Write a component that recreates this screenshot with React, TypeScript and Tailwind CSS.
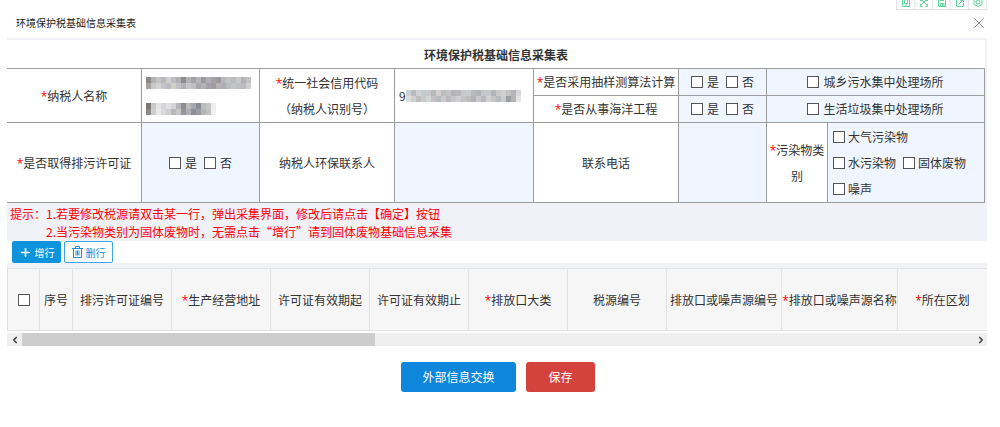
import type { ReactNode } from 'react';
import { Plus, X, ChevronLeft, ChevronRight } from 'lucide-react';

const columns = [
  { name: '序号', width: 'w-[33px]' },
  { name: '排污许可证编号', width: 'w-[99px]' },
  { name: '生产经营地址', width: 'w-[99px]', required: true },
  { name: '许可证有效期起', width: 'w-[99px]' },
  { name: '许可证有效期止', width: 'w-[99px]' },
  { name: '排放口大类', width: 'w-[99px]', required: true },
  { name: '税源编号', width: 'w-[99px]' },
  { name: '排放口或噪声源编号', width: 'w-[115px]' },
  { name: '排放口或噪声源名称', width: 'w-[116px]', required: true },
  { name: '所在区划', width: 'w-[89px]', required: true },
];

const nameMask = [
  '8c8884 b4b4b6 c4c4c6 b9b9bb cfd0d2 bdbcc0 b2b0b0 8f8d90 b3b3b6 a5a3a8 b9b5b5 9b9ca2 b0aeb4 a3a1a4 989a9c b8b8bb c4c3c2 b7bbc0 c9c8c8 b4b3b6 c2c2c4',
  'a8a4a0 c8c8ca d4d3d4 c4c4c8 bcbcc0 d3cfca c1c1c4 b2b2b5 c7c6c8 bebdc2 a9a8ae b3b3b4 a2a2a8 9f9da2 b7b3b3 adafb4 bbbcc0 c5c4c6 bdbec2 bdbcbc cfcfd1',
];

const branchMask = [
  '7b7875 c9c8ca e4e3e3 d6d6d8 e0e0e1 d4d4d6 b3b3b8 8e8c92 bcb9bb a5a5ad 8a8a94 bebdbd c5c5c6 eeeeee',
  '8b8886 cfcfd2 e9e9ea dadadc cfcfd1 b9b9bc c6c6c9 96959a b0afb5 8e8e99 9c9ca4 b5b5b9 c1c1c3 f0f0f0',
];

const codeMask = [
  'd0d0d0 b8bcbc d3d1d1 c3cdce c9c9cc b4b8ba d2cecd bcbcbf c4c4c5 b1b4b8 bab9b9 c8c8ca c6cccd bcb9bb b2b4b9 c8c6c8 c4c7cb b4b4b8 cacacb d1cfcd c0c2c4 b4b5b7 d6d6d8',
  'dedede cfd1d1 bebebf c9caca d3d7d8 c4c2c3 b7bbbe cbc9c8 b9b9bd c3c6c8 d0cecf c2c4c8 bdbdbe b3b1b4 c7c9cb b9b8bc d1d0d0 c4c5c9 b8b9bd cbcccd 9e9ea0 b5b5b8 e5e5e6',
];

function Mosaic({ rows }: { rows: string[] }) {
  const cells = rows.map((row) => row.split(' '));
  const width = cells[0].length * 5;
  return (
    <svg width={width} height={12} viewBox={`0 0 ${width} 12`} className="block shrink-0" aria-hidden="true">
      {cells.map((row, y) =>
        row.map((color, x) => <rect key={`${x}-${y}`} x={x * 5} y={y * 6} width={5} height={6} fill={`#${color}`} />)
      )}
    </svg>
  );
}

function Required() {
  return <span className="font-['Open_Sans',sans-serif] leading-none text-[#ff0000]">*</span>;
}

function Box({ label }: { label?: string }) {
  return (
    <input
      type="checkbox"
      aria-label={label}
      className="size-3 shrink-0 appearance-none border border-[#555] bg-white checked:bg-[#0d86dc]"
    />
  );
}

function Check({ children, gap = 'gap-1' }: { children: ReactNode; gap?: string }) {
  return (
    <label className={`flex items-center whitespace-nowrap ${gap}`}>
      <Box />
      {children}
    </label>
  );
}

function YesNo() {
  return (
    <div className="flex items-center justify-center gap-[7px]">
      <Check>是</Check>
      <Check>否</Check>
    </div>
  );
}

function TrashIcon() {
  return (
    <svg width={11} height={12} viewBox="0 0 11 12" fill="none" stroke="currentColor">
      <path d="M0 2.500H11M3.500 2V0.500H7.500V2M1.500 3V11.500H9.500V3M4 4.500V9.500M5.500 4.500V9.500M7 4.500V9.500" />
    </svg>
  );
}

function Toolbar() {
  const item = 'flex h-[9px] w-[18px] items-end justify-center border-r border-[#e6e6e6] pb-[2px]';
  const icon = { width: 10, height: 7, viewBox: '0 3 10 7', fill: 'none', stroke: '#5fd39a' };
  return (
    <div className="mr-[13px] flex h-[10px] border-b border-l border-[#e0e0e0]">
      <button aria-label="手机" className={item}>
        <svg {...icon}><path d="M1.500 0V9.500H8.500V0M3.500 0V6.500H6.500V0M4 8H6" /></svg>
      </button>
      <button aria-label="全屏" className={item}>
        <svg {...icon}><path d="M2 2L8 8M8 2L2 8M1.500 7V9.500H3.500M6.500 9.500H8.500V7M1 3.500H3M7 3.500H9" /></svg>
      </button>
      <button aria-label="保存图片" className={item}>
        <svg {...icon}><path d="M1.500 0V9.500H8.500V0M3 3.500H7M3.500 9V6.500H7V9M5.500 7V9" /></svg>
      </button>
      <button aria-label="分享" className={item}>
        <svg {...icon}><path d="M1.500 1V9.500H8.500V6M3.500 7.500L8 3M5.500 3.500H8.500V5" /></svg>
      </button>
      <button aria-label="设置" className={item}>
        <svg {...icon}><path d="M5 0.500L9 2.500V7.500L5 9.500L1 7.500V2.500Z" /><circle cx="5" cy="5" r="2" /></svg>
      </button>
    </div>
  );
}

function BaseInfo() {
  const label = 'border-r border-b border-[#9c9c9c] bg-white p-0 text-center font-normal whitespace-nowrap';
  const field = 'border-r border-b border-[#9c9c9c] bg-[#f0f6ff] p-0';
  return (
    <table className="w-full table-fixed border-separate border-spacing-0 leading-[26px]">
      <caption className="h-[29px] border-b border-[#9c9c9c] bg-white pt-[2px] text-center font-bold">环境保护税基础信息采集表</caption>
      <colgroup>
        <col className="w-[135px]" />
        <col className="w-[118px]" />
        <col className="w-[135px]" />
        <col className="w-[139px]" />
        <col className="w-[145px]" />
        <col className="w-[88px]" />
        <col className="w-[61px]" />
        <col />
      </colgroup>
      <tbody>
        <tr className="h-[27px]">
          <th rowSpan={2} className={label}><Required />纳税人名称</th>
          <td rowSpan={2} className="border-r border-b border-[#9c9c9c] bg-white p-0 pl-1">
            <div className="flex flex-col gap-[14px]">
              <Mosaic rows={nameMask} />
              <Mosaic rows={branchMask} />
            </div>
          </td>
          <th rowSpan={2} className={label}><Required />统一社会信用代码<br />（纳税人识别号）</th>
          <td rowSpan={2} className="border-r border-b border-[#9c9c9c] bg-white p-0 pl-1">
            <div className="flex items-center">
              9
              <Mosaic rows={codeMask} />
            </div>
          </td>
          <th className={label}><Required />是否采用抽样测算法计算</th>
          <td className={field}><YesNo /></td>
          <td colSpan={2} className={field}>
            <div className="flex justify-center"><Check>城乡污水集中处理场所</Check></div>
          </td>
        </tr>
        <tr className="h-[27px]">
          <th className={label}><Required />是否从事海洋工程</th>
          <td className={field}><YesNo /></td>
          <td colSpan={2} className={field}>
            <div className="flex justify-center"><Check>生活垃圾集中处理场所</Check></div>
          </td>
        </tr>
        <tr className="h-[80px]">
          <th className={label}><Required />是否取得排污许可证</th>
          <td className={field}><YesNo /></td>
          <th className={label}>纳税人环保联系人</th>
          <td className={field}>
            <input aria-label="纳税人环保联系人" className="block h-[78px] w-full bg-transparent px-1 outline-none" />
          </td>
          <th className={label}>联系电话</th>
          <td className={field}>
            <input aria-label="联系电话" className="block h-[78px] w-full bg-transparent px-1 outline-none" />
          </td>
          <th className={label}><Required />污染物类<br />别</th>
          <td className={field}>
            <div className="flex flex-wrap gap-x-[7px] pl-[5px]">
              <div className="w-full"><Check gap="gap-[3px]">大气污染物</Check></div>
              <Check gap="gap-[3px]">水污染物</Check>
              <Check gap="gap-[3px]">固体废物</Check>
              <div className="w-full"><Check gap="gap-[3px]">噪声</Check></div>
            </div>
          </td>
        </tr>
      </tbody>
    </table>
  );
}

function SourceGrid() {
  const cell = 'border-r border-[#e2e2e2] p-0 font-normal whitespace-nowrap';
  return (
    <div className="bg-white">
      <table className="w-full table-fixed border-separate border-spacing-0 border-y border-l border-[#e2e2e2] bg-[#f6f6f6]">
        <thead>
          <tr className="h-[61px]">
            <th className={`${cell} w-[32px]`}>
              <div className="flex justify-center"><Box label="全选" /></div>
            </th>
            {columns.map((col) => (
              <th key={col.name} className={`${cell} ${col.width} last:border-r-0`}>
                {col.required && <Required />}{col.name}
              </th>
            ))}
          </tr>
        </thead>
      </table>
      <div className="mt-[2px] flex h-[13px] items-center bg-[#efefef]">
        <button aria-label="向左滚动" className="flex w-[15px] shrink-0 justify-center"><ChevronLeft size={10} strokeWidth={4} color="#444" /></button>
        <div className="h-full flex-1"><div className="h-full w-[37%] bg-[#cdcdcd]" /></div>
        <button aria-label="向右滚动" className="flex w-[12px] shrink-0 justify-center"><ChevronRight size={10} strokeWidth={4} color="#444" /></button>
      </div>
    </div>
  );
}

export default function App() {
  return (
    <div className="min-h-screen bg-white font-['Noto_Sans_CJK_SC',sans-serif] text-[12px] text-[#333]">
      <div className="flex h-[10px] justify-end"><Toolbar /></div>
      <header className="flex h-7 items-center justify-between pr-3 pb-[3px] pl-4">
        <h1 className="text-[10px] text-[#222]">环境保护税基础信息采集表</h1>
        <button aria-label="关闭"><X size={18} strokeWidth={1} color="#666" /></button>
      </header>
      <main className="mr-[13px] ml-[7px]">
        <div className="bg-[#f0f2f8] pt-[2px] pr-[2px]"><BaseInfo /></div>
        <div className="flex bg-[#f0f2f8] px-[3px] pt-[2px] leading-[18px] text-[#ff0000]">
          <span>提示：</span>
          <div>
            <p>1.若要修改税源请双击某一行，弹出采集界面，修改后请点击【确定】按钮</p>
            <p>2.当污染物类别为固体废物时，无需点击“增行”请到固体废物基础信息采集</p>
          </div>
        </div>
        <div className="flex gap-[3px] bg-white pl-[5px] text-[10px]">
          <button className="flex h-[22px] w-[49px] items-center justify-center gap-[3px] rounded-[2px] bg-[#0d94dc] text-white">
            <Plus size={13} strokeWidth={3} />增行
          </button>
          <button className="flex h-[22px] w-[49px] items-center justify-center gap-[3px] rounded-[2px] border border-[#39a7e2] bg-white text-[#1c8fd6]">
            <TrashIcon />删行
          </button>
        </div>
        <div className="h-[5px] bg-[#f0f2f8]" />
        <SourceGrid />
      </main>
      <footer className="flex justify-center gap-[10px] pt-4 pr-1 pb-8 text-white">
        <button className="h-[30px] w-[115px] rounded-[3px] bg-[#0d86dc]">外部信息交换</button>
        <button className="h-[30px] w-[69px] rounded-[3px] bg-[#d3423c]">保存</button>
      </footer>
    </div>
  );
}
